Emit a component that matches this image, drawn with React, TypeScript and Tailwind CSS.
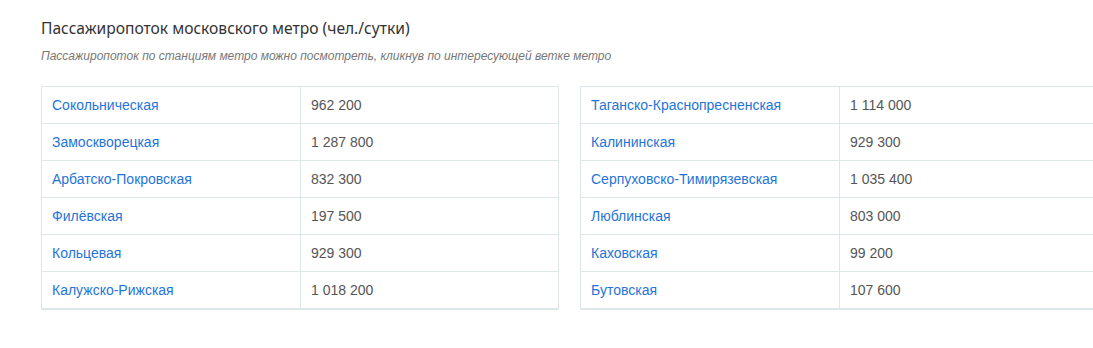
import React from "react";

const left: [string, string][] = [
  ["Сокольническая", "962 200"],
  ["Замоскворецкая", "1 287 800"],
  ["Арбатско-Покровская", "832 300"],
  ["Филёвская", "197 500"],
  ["Кольцевая", "929 300"],
  ["Калужско-Рижская", "1 018 200"],
];
const right: [string, string][] = [
  ["Таганско-Краснопресненская", "1 114 000"],
  ["Калининская", "929 300"],
  ["Серпуховско-Тимирязевская", "1 035 400"],
  ["Люблинская", "803 000"],
  ["Каховская", "99 200"],
  ["Бутовская", "107 600"],
];

function Table({ rows }: { rows: [string, string][] }) {
  return (
    <div className="w-[518px] shrink-0 border-l border-r border-t border-b-2 border-[#dde7ea]">
      {rows.map(([name, val], i) => (
        <div
          key={name}
          className={`flex ${i > 0 ? "h-[37px] border-t border-[#dde7ea]" : "h-[36px]"}`}
        >
          <div className="w-[259px] shrink-0 border-r border-[#dde7ea] pl-[10px] flex items-center">
            <a className="text-[14px] text-[#1f74d9] cursor-pointer">{name}</a>
          </div>
          <div className="flex-1 pl-[10px] flex items-center text-[14px] text-[#555]">{val}</div>
        </div>
      ))}
    </div>
  );
}

export default function App() {
  return (
    <div className="w-[1093px] h-[348px] overflow-hidden bg-white" style={{ fontFamily: '"Liberation Sans", Arial, sans-serif' }}>
      <div className="pl-[41px] pt-[17px]">
        <h2 className="text-[15.6px] leading-[22px] text-[#333]" style={{ fontFamily: '"Noto Sans", "Open Sans", sans-serif' }}>
          Пассажиропоток московского метро (чел./сутки)
        </h2>
        <p className="mt-[9px] text-[12px] italic text-[#777] leading-[16px]">
          Пассажиропоток по станциям метро можно посмотреть, кликнув по интересующей ветке метро
        </p>
        <div className="mt-[22px] flex gap-[21px]">
          <Table rows={left} />
          <Table rows={right} />
        </div>
      </div>
    </div>
  );
}
